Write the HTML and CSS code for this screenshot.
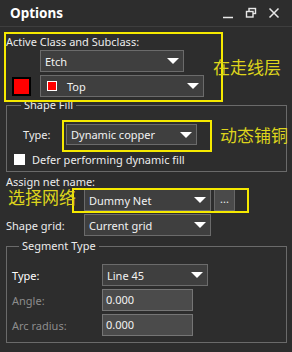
FILE: index.html
```html
<!DOCTYPE html>
<html lang="en">
<head>
    <meta charset="UTF-8">
    <title>Options</title>
    <link rel="stylesheet" href="styles.css">
</head>
<body>

    <!-- Title bar -->
    <div class="titlebar">
        <span class="title">Options</span>
        <div class="win-btns">
            <svg width="12" height="12" viewBox="0 0 12 12"><line x1="1" y1="10.5" x2="11" y2="10.5" stroke="#e8e8e8" stroke-width="1.5"/></svg>
            <svg width="12" height="12" viewBox="0 0 12 12"><rect x="4" y="1.5" width="6.5" height="5" fill="none" stroke="#e8e8e8" stroke-width="1.4"/><rect x="1.5" y="4.5" width="6.5" height="5.5" fill="#2d2d2d" stroke="#e8e8e8" stroke-width="1.4"/></svg>
            <svg width="12" height="12" viewBox="0 0 12 12"><path d="M1.5 1.5 L10.5 10.5 M10.5 1.5 L1.5 10.5" stroke="#e8e8e8" stroke-width="1.5"/></svg>
        </div>
    </div>

    <div class="panel">
        <!-- Active class -->
        <div class="line-label">Active Class and Subclass:</div>
        <div class="row class-row">
            <div class="select w-etch"><span>Etch</span><i class="arrow"></i></div>
        </div>
        <div class="row sub-row">
            <span class="swatch"></span>
            <div class="select w-top"><span><b class="mini-swatch"></b>Top</span><i class="arrow"></i></div>
        </div>

        <!-- Shape Fill -->
        <fieldset class="group fill-group">
            <legend>Shape Fill</legend>
            <div class="row fill-type">
                <label class="lbl-type">Type:</label>
                <div class="select w-copper"><span>Dynamic copper</span><i class="arrow"></i></div>
            </div>
            <div class="row check-row">
                <span class="checkbox"></span>
                <span>Defer performing dynamic fill</span>
            </div>
        </fieldset>

        <div class="line-label net-label">Assign net name:</div>
        <div class="row net-row">
            <div class="select w-net"><span>Dummy Net</span><i class="arrow"></i></div>
            <div class="dots-btn">...</div>
        </div>
        <div class="row grid-row">
            <label class="lbl-grid">Shape grid:</label>
            <div class="select w-net"><span>Current grid</span><i class="arrow"></i></div>
        </div>

        <!-- Segment Type -->
        <fieldset class="group seg-group">
            <legend>Segment Type</legend>
            <div class="row seg-type">
                <label class="lbl-seg strong">Type:</label>
                <div class="select w-line"><span>Line 45</span><i class="arrow"></i></div>
            </div>
            <div class="row seg-row">
                <label class="lbl-seg muted">Angle:</label>
                <div class="input">0.000</div>
            </div>
            <div class="row seg-row">
                <label class="lbl-seg muted">Arc radius:</label>
                <div class="input">0.000</div>
            </div>
        </fieldset>
    </div>

    <!-- Annotations drawn over the dialog -->
    <div class="mark mark-class"></div>
    <div class="note note-class">在走线层</div>
    <div class="mark mark-fill"></div>
    <div class="note note-fill">动态铺铜</div>
    <div class="mark mark-net"></div>
    <div class="note note-net">选择网络</div>

</body>
</html>
```

FILE: styles.css
```css
* {
    margin: 0;
    padding: 0;
    box-sizing: border-box;
}

body {
    font-family: 'Noto Sans', sans-serif;
    font-size: 11px;
    background-color: #2d2d2d;
    color: #ececec;
    width: 292px;
    height: 352px;
    position: relative;
    overflow: hidden;
}

/* Title bar */
.titlebar {
    height: 27px;
    display: flex;
    align-items: center;
    padding-left: 10px;
    border-bottom: 1px solid #3e3e3e;
}

.title {
    font-weight: bold;
    font-size: 13.5px;
    color: #ffffff;
}

.win-btns {
    margin-left: auto;
    display: flex;
    gap: 11px;
    padding-right: 12px;
}

/* Panel */
.panel {
    padding: 0 5px 0 6px;
}

.row {
    display: flex;
    align-items: center;
}

.line-label {
    line-height: 16px;
    margin-top: 7px;
}

.class-row {
    padding-left: 34px;
}

.sub-row {
    margin-top: 3px;
    padding-left: 6px;
}

.swatch {
    width: 19px;
    height: 19px;
    background-color: #ff0000;
    border: 2px solid #000;
    margin-right: 9px;
}

/* Dropdowns */
.select {
    height: 22px;
    display: flex;
    align-items: center;
    justify-content: space-between;
    padding: 0 4px 0 4px;
    background-color: #3f3f3f;
    border: 1px solid #6b6b6b;
    color: #f2f2f2;
}

.select span {
    display: flex;
    align-items: center;
}

.arrow {
    width: 0;
    height: 0;
    border-left: 6px solid transparent;
    border-right: 6px solid transparent;
    border-top: 6px solid #ffffff;
}

.mini-swatch {
    width: 10px;
    height: 10px;
    background-color: #ff0000;
    border: 1px solid #ffffff;
    margin: 0 10px 0 2px;
}

.w-etch { width: 144px; }
.w-top { width: 164px; }
.w-copper { width: 131px; height: 21px; }
.w-net { width: 127px; }
.w-line { width: 106px; }

/* Group boxes */
.group {
    border: 1px solid #6a6a6a;
}

.group legend {
    line-height: 16px;
    padding: 0 3px;
    margin-left: 7px;
}

.fill-group {
    padding: 0 0 4px 7px;
}

.fill-type {
    margin-top: 11px;
    padding-left: 9px;
}

.lbl-type {
    width: 43px;
}

.check-row {
    margin-top: 6px;
    height: 16px;
}

.checkbox {
    width: 11px;
    height: 11px;
    background-color: #ffffff;
    margin-right: 7px;
}

.net-label {
    margin-top: 2px;
    line-height: 15px;
}

.net-row {
    padding-left: 78px;
}

.dots-btn {
    width: 21px;
    height: 22px;
    margin-left: 3px;
    background-color: #4a4a4a;
    border: 1px solid #666;
    text-align: center;
    line-height: 18px;
}

.grid-row {
    margin-top: 3px;
}

.lbl-grid {
    width: 78px;
}

.seg-group {
    margin-top: 2px;
    padding: 0 0 6px 5px;
}

.seg-type {
    margin-top: 10px;
}

.seg-row {
    margin-top: 3px;
}

.lbl-seg {
    width: 90px;
}

.lbl-seg.strong {
    color: #ffffff;
}

.lbl-seg.muted {
    color: #8c8c8c;
}

.input {
    width: 91px;
    height: 22px;
    padding-left: 3px;
    line-height: 20px;
    background-color: #4b4b4b;
    border: 1px solid #757575;
    color: #f2f2f2;
}

/* Annotation boxes and notes */
.mark {
    position: absolute;
    border: 2px solid #f5e900;
}

.mark-class { left: 4px; top: 32px; width: 219px; height: 70px; }
.mark-fill { left: 62px; top: 120px; width: 150px; height: 32px; }
.mark-net { left: 72px; top: 188px; width: 177px; height: 25px; }

.note {
    position: absolute;
    font-family: 'Liberation Sans', 'Noto Sans CJK SC', sans-serif;
    font-size: 17px;
    line-height: 16px;
    color: #ddd41c;
}

.note-class { left: 213px; top: 61px; }
.note-fill { left: 220px; top: 129px; }
.note-net { left: 8px; top: 191px; }
```
